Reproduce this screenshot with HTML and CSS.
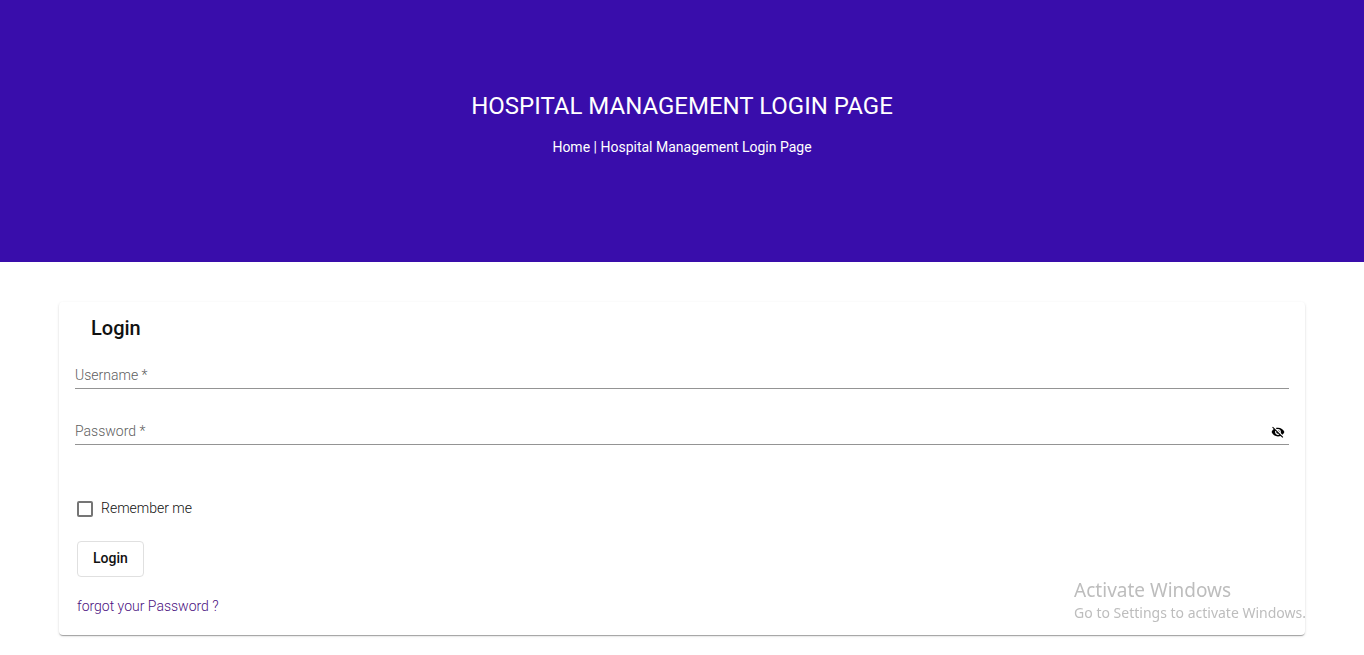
FILE: index.html
```html
<!DOCTYPE html>
<html lang="en">
<head>
<meta charset="utf-8">
<meta name="viewport" content="width=device-width, initial-scale=1">
<title>Hospital Management Login Page</title>
<link rel="stylesheet" href="styles.css">
</head>
<body>
<header class="banner">
  <h1 class="banner-title">HOSPITAL MANAGEMENT LOGIN PAGE</h1>
  <nav class="breadcrumb"><a href="#">Home</a> | Hospital Management Login Page</nav>
</header>
<main class="content">
  <form class="card">
    <h2 class="card-title">Login</h2>
    <div class="field">
      <input class="field-input" id="username" type="text" placeholder="Username *" aria-label="Username" required>
    </div>
    <div class="field">
      <input class="field-input" id="password" type="password" placeholder="Password *" aria-label="Password" required>
      <button class="toggle" type="button" aria-label="Show password">
        <svg class="toggle-icon" viewBox="0 0 24 24" aria-hidden="true"><path d="M12 7c2.76 0 5 2.24 5 5 0 .65-.13 1.26-.36 1.83l2.92 2.92c1.51-1.26 2.7-2.89 3.43-4.75-1.73-4.39-6-7.5-11-7.5-1.4 0-2.74.25-3.98.7l2.16 2.16C10.74 7.13 11.35 7 12 7zM2 4.27l2.28 2.28.46.46C3.08 8.3 1.78 10.02 1 12c1.73 4.39 6 7.5 11 7.5 1.55 0 3.03-.3 4.38-.84l.42.42L19.73 22 21 20.73 3.27 3 2 4.27zM7.53 9.8l1.55 1.55c-.05.21-.08.43-.08.65 0 1.66 1.34 3 3 3 .22 0 .44-.03.65-.08l1.55 1.55c-.67.33-1.41.53-2.2.53-2.76 0-5-2.24-5-5 0-.79.2-1.53.53-2.2zm4.31-.78l3.15 3.15.02-.16c0-1.66-1.34-3-3-3l-.17.01z"/></svg>
      </button>
    </div>
    <div class="actions">
      <label class="remember"><input class="remember-box" type="checkbox">Remember me</label>
      <button class="submit" type="submit">Login</button>
      <a class="forgot" href="#">forgot your Password ?</a>
    </div>
  </form>
</main>
<aside class="watermark">
  <p class="watermark-title">Activate Windows</p>
  <p class="watermark-text">Go to Settings to activate Windows.</p>
</aside>
</body>
</html>
```
FILE: styles.css
```css
* {
  box-sizing: border-box;
}

body {
  margin: 0;
  background: #fff;
  color: #111;
  font: 300 14px/20px Roboto, "Liberation Sans", sans-serif;
}

.banner {
  padding: 90px 16px 105px;
  background: #390dab;
  color: #fff;
  text-align: center;
}

.banner-title {
  margin: 0 0 15px;
  font-size: 24px;
  font-weight: 400;
  line-height: 32px;
}

.breadcrumb {
  font-weight: 400;
}

.breadcrumb a {
  color: inherit;
  text-decoration: none;
}

.content {
  padding: 40px 59px 20px;
}

.card {
  padding: 10px 16px 19px;
  border-radius: 4px;
  box-shadow: 0 2px 1px -1px rgba(0, 0, 0, 0.2), 0 1px 1px rgba(0, 0, 0, 0.14), 0 1px 3px rgba(0, 0, 0, 0.12);
}

.card-title {
  margin: 0 16px 13px;
  font-size: 20px;
  font-weight: 500;
  line-height: 32px;
}

.field {
  display: flex;
  align-items: center;
  height: 32px;
  margin-bottom: 24px;
  padding-top: 5px;
  border-bottom: 1px solid #949494;
}

.field-input {
  flex: 1;
  min-width: 0;
  padding: 0;
  border: 0;
  outline: 0;
  background: none;
  color: inherit;
  font: inherit;
}

.field-input::placeholder {
  color: #606060;
  opacity: 1;
}

.toggle {
  display: flex;
  padding: 6px 4px 4px;
  border: 0;
  background: none;
  color: #000;
}

.toggle-icon {
  width: 14px;
  height: 14px;
  fill: currentColor;
}

.actions {
  display: flex;
  flex-direction: column;
  align-items: flex-start;
  margin-top: 53px;
  padding-left: 2px;
}

.remember {
  display: flex;
  align-items: center;
  gap: 8px;
}

.remember-box {
  width: 16px;
  height: 16px;
  margin: 2px 0 0;
  appearance: none;
  border: 2px solid #757575;
  border-radius: 2px;
}

.remember-box:checked {
  background: #390dab;
}

.submit {
  height: 36px;
  margin: 23px 0 19px;
  padding: 0 15px 2px;
  border: 1px solid #e0e0e0;
  border-radius: 4px;
  background: #fff;
  color: inherit;
  font: 500 14px/32px Roboto, "Liberation Sans", sans-serif;
}

.forgot {
  color: #4a1080;
  text-decoration: none;
}

.watermark {
  position: fixed;
  right: 58px;
  bottom: 32px;
  color: #bdbdbd;
  font-family: "Noto Sans", "Open Sans", sans-serif;
  pointer-events: none;
}

.watermark p {
  margin: 0;
  font-weight: 400;
}

.watermark-title {
  font-size: 19px;
  line-height: 26px;
}

.watermark-text {
  font-size: 14px;
  line-height: 20px;
}
```
